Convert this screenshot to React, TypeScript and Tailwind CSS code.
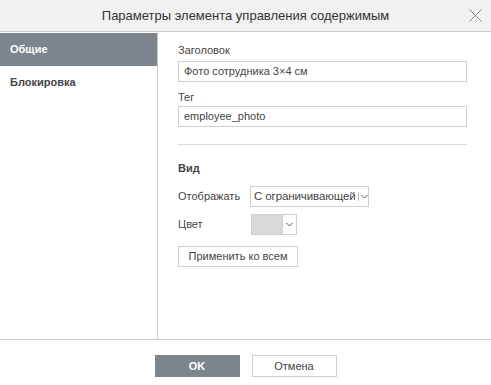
function Chevron() {
  return (
    <svg width="7" height="5" viewBox="0 0 7 5" className="shrink-0">
      <path d="M0.5 1 L3.5 4 L6.5 1" fill="none" stroke="#555" strokeWidth="1" />
    </svg>
  );
}

export default function App() {
  const labelCls = 'text-[11px] leading-[14px] text-[#444]';
  const inputCls =
    'h-[21px] w-full border border-[#cfcfcf] bg-white px-[5px] text-[11px] leading-[19px] text-[#444] flex items-center';

  return (
    <div
      className="w-[491px] h-[385px] bg-white flex flex-col overflow-hidden text-[#444]"
      style={{ fontFamily: '"Liberation Sans", Arial, sans-serif' }}
    >
      {/* Header */}
      <div className="h-[32px] shrink-0 bg-[#f1f1f1] border-b border-[#cbcbcb] relative flex items-center justify-center">
        <span className="text-[13px] text-[#333]">Параметры элемента управления содержимым</span>
        <svg width="13" height="13" viewBox="0 0 13 13" className="absolute left-[469px] top-[9px]">
          <path d="M0.5 0.5 L12.5 12.5 M12.5 0.5 L0.5 12.5" stroke="#8a8a8a" strokeWidth="1" fill="none" />
        </svg>
      </div>

      {/* Body */}
      <div className="flex flex-1 min-h-0 border-b border-[#cbcbcb]">
        <div className="w-[158px] shrink-0 border-r border-[#cbcbcb] pt-px">
          <div className="h-[33px] bg-[#7d858c] px-[10px] flex items-center text-[11px] font-bold text-white">
            Общие
          </div>
          <div className="h-[33px] px-[10px] flex items-center text-[11px] font-bold text-[#444]">
            Блокировка
          </div>
        </div>

        <div className="flex-1 pl-[20px] pr-[24px] pt-[11px] flex flex-col">
          <div className={labelCls}>Заголовок</div>
          <div className={`${inputCls} mt-[4px]`}>Фото сотрудника 3×4 см</div>

          <div className={`${labelCls} mt-[8px]`}>Тег</div>
          <div className={`${inputCls} mt-[2px]`}>employee_photo</div>

          <div className="h-px bg-[#d8d8d8] mt-[17px]" />

          <div className="text-[11px] leading-[14px] font-bold text-[#444] mt-[16px]">Вид</div>

          <div className="flex items-center mt-[11px] h-[21px]">
            <div className="w-[72px] text-[11px] text-[#444]">Отображать</div>
            <div className="w-[119px] h-[21px] border border-[#cfcfcf] flex items-center pl-[3px] pr-[3px] gap-[2px]">
              <span className="flex-1 whitespace-nowrap text-[11.5px] tracking-[-0.1px] text-[#444]">
                С ограничивающей
              </span>
              <span className="w-px h-[9px] bg-[#bbb] shrink-0" />
              <Chevron />
            </div>
          </div>

          <div className="flex items-center mt-[7px] h-[21px]">
            <div className="w-[73px] text-[11px] text-[#444]">Цвет</div>
            <div className="w-[46px] h-[21px] border border-[#cfcfcf] flex items-center">
              <div className="w-[31px] h-[19px] bg-[#d9d9d9] border-r border-[#cfcfcf]" />
              <div className="flex-1 flex items-center justify-center">
                <Chevron />
              </div>
            </div>
          </div>

          <div className="mt-[11px] w-[120px] h-[21px] border border-[#cfcfcf] flex items-center justify-center text-[11px] text-[#444]">
            Применить ко всем
          </div>
        </div>
      </div>

      {/* Footer */}
      <div className="h-[45px] shrink-0 flex justify-center gap-[12px] pt-[15px]">
        <div className="w-[85px] h-[22px] bg-[#7d858c] flex items-center justify-center text-[11px] font-bold text-white">
          OK
        </div>
        <div className="w-[85px] h-[22px] border border-[#cfcfcf] flex items-center justify-center text-[11px] text-[#444]">
          Отмена
        </div>
      </div>
    </div>
  );
}
